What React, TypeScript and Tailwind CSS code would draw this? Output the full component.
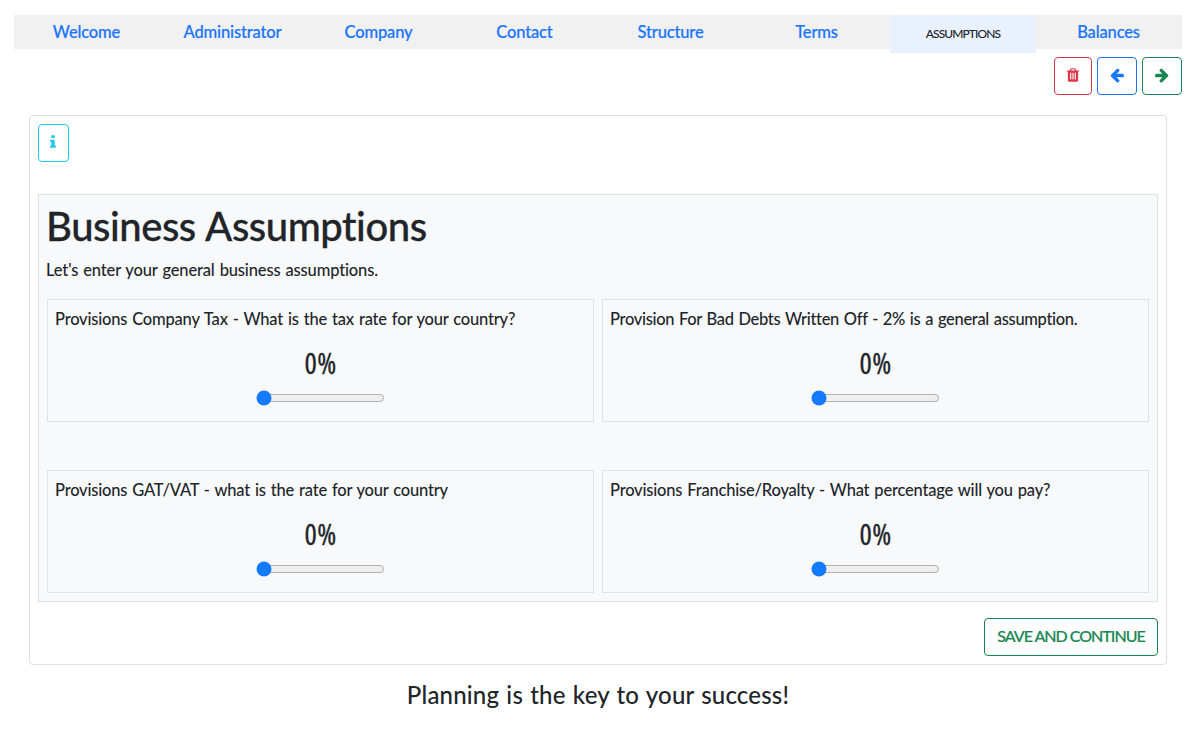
import { useState } from "react";

const icons = {
  trash:
    "M704 1376v-704q0-14-9-23t-23-9h-64q-14 0-23 9t-9 23v704q0 14 9 23t23 9h64q14 0 23-9t9-23zm256 0v-704q0-14-9-23t-23-9h-64q-14 0-23 9t-9 23v704q0 14 9 23t23 9h64q14 0 23-9t9-23zm256 0v-704q0-14-9-23t-23-9h-64q-14 0-23 9t-9 23v704q0 14 9 23t23 9h64q14 0 23-9t9-23zm-544-992h448l-48-117q-7-9-17-11h-317q-10 2-17 11zm928 32v64q0 14-9 23t-23 9h-96v948q0 83-47 143.5t-113 60.5h-832q-66 0-113-58.5t-47-141.5v-952h-96q-14 0-23-9t-9-23v-64q0-14 9-23t23-9h309l70-167q15-37 54-63t79-26h320q40 0 79 26t54 63l70 167h309q14 0 23 9t9 23z",
  left: "M1664 896v128q0 53-32.5 90.5t-84.5 37.5h-704l293 294q38 36 38 90t-38 90l-75 76q-37 37-90 37-52 0-91-37l-651-652q-37-37-37-90 0-52 37-91l651-650q38-38 91-38 52 0 90 38l75 74q38 38 38 91t-38 91l-293 293h704q52 0 84.5 37.5t32.5 90.5z",
  right:
    "M1600 960q0 54-37 91l-651 651q-39 37-91 37-51 0-90-37l-75-75q-38-38-38-91t38-91l293-293h-704q-52 0-84.5-37.5t-32.5-90.5v-128q0-53 32.5-90.5t84.5-37.5h704l-293-294q-38-36-38-90t38-90l75-75q38-38 90-38 53 0 91 38l651 651q37 35 37 90z",
  info: "M1216 1344v128q0 26-19 45t-45 19h-512q-26 0-45-19t-19-45v-128q0-26 19-45t45-19h64v-384h-64q-26 0-45-19t-19-45v-128q0-26 19-45t45-19h384q26 0 45 19t19 45v576h64q26 0 45 19t19 45zm-128-1152v192q0 26-19 45t-45 19h-256q-26 0-45-19t-19-45v-192q0-26 19-45t45-19h256q26 0 45 19t19 45z",
};

function Icon({ name }: { name: keyof typeof icons }) {
  return (
    <svg viewBox="0 0 1792 1792" className="mb-0.5 size-4 shrink-0 fill-current" aria-hidden="true">
      <path d={icons[name]} />
    </svg>
  );
}

const tabs = ["Welcome", "Administrator", "Company", "Contact", "Structure", "Terms", "Assumptions", "Balances"];

function Assumption({ label, tracking = "tracking-[-0.2px]" }: { label: string; tracking?: string }) {
  const [value, setValue] = useState(0);
  return (
    <div className="flex h-[123px] flex-col border border-[#dee2e6] px-[7px] pt-[7px]">
      <p className={`leading-[25px] whitespace-nowrap ${tracking}`}>{label}</p>
      <div className="mt-[14px] mb-px text-center font-['Open_Sans'] text-[29px] leading-[34px] font-normal tracking-[0.4px] [font-stretch:75%] [-webkit-text-stroke:0.3px]">
        {value}%
      </div>
      <input
        type="range"
        value={value}
        onChange={(e) => setValue(Number(e.target.value))}
        className="mt-[9px] h-4 w-[129px] self-center accent-[#147aff]"
      />
    </div>
  );
}

export default function App() {
  return (
    <div className="h-[751px] bg-white px-[14px] pt-[15px] font-['Lato','Noto_Sans',sans-serif] text-[16.5px] font-medium tracking-[-0.15px] text-[#212529] [word-spacing:1px]">
      <nav className="mr-0.5 grid h-[34px] grid-cols-8 bg-[#f1f1f1] text-center leading-[35px] text-[#1a75ff] [-webkit-text-stroke:0.2px]">
        {tabs.map((tab) =>
          tab === "Assumptions" ? (
            <a
              key={tab}
              className="h-[38px] bg-[#e9f1ff] text-xs leading-[37px] tracking-[-0.9px] text-[#212529] uppercase [-webkit-text-stroke:0px]"
            >
              {tab}
            </a>
          ) : (
            <a key={tab} className="pr-px">
              {tab}
            </a>
          ),
        )}
      </nav>
      <div className="mt-2 mr-0.5 flex h-[38px] justify-end gap-[5px]">
        <button className="flex w-[38px] items-center justify-center rounded border border-[#dc3545] text-[#dc3545]">
          <Icon name="trash" />
        </button>
        <button className="flex w-10 items-center justify-center rounded border border-[#1a75ff] text-[#1a75ff]">
          <Icon name="left" />
        </button>
        <button className="flex w-10 items-center justify-center rounded border border-[#198754] text-[#198754]">
          <Icon name="right" />
        </button>
      </div>
      <main className="mt-5 mr-[17px] ml-[15px] h-[550px] rounded border border-[#dfdfdf] p-2">
        <button className="flex h-[38px] w-[31px] items-center justify-center rounded border border-[#22c9ee] pr-px text-[#22c9ee]">
          <Icon name="info" />
        </button>
        <section className="mt-8 h-[408px] border border-[#dee2e6] bg-[#f8f9fb] px-2 pt-[7px]">
          <h1 className="-ml-px text-[40px] leading-12 tracking-[-0.45px] [-webkit-text-stroke:0.3px]">
            Business Assumptions
          </h1>
          <p className="mt-2 -ml-px leading-6">Let's enter your general business assumptions.</p>
          <div className="mt-[17px] grid grid-cols-2 gap-x-2 gap-y-12">
            <Assumption label="Provisions Company Tax - What is the tax rate for your country?" />
            <Assumption
              label="Provision For Bad Debts Written Off - 2% is a general assumption."
              tracking="tracking-[-0.33px]"
            />
            <Assumption label="Provisions GAT/VAT - what is the rate for your country" />
            <Assumption label="Provisions Franchise/Royalty - What percentage will you pay?" />
          </div>
        </section>
        <div className="mt-4 flex justify-end">
          <button className="h-[38px] w-[174px] rounded border border-[#198754] pb-0.5 text-base tracking-[-1px] whitespace-nowrap text-[#198754] [-webkit-text-stroke:0.2px]">
            SAVE AND CONTINUE
          </button>
        </div>
      </main>
      <footer className="mt-[15px] mr-0.5 text-center text-2xl leading-[30px] tracking-[0.18px]">
        Planning is the key to your success!
      </footer>
    </div>
  );
}
